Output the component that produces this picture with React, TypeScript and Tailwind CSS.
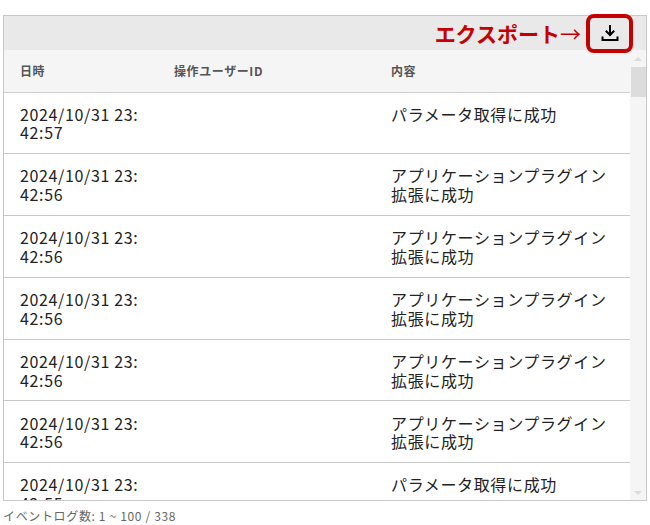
import React from 'react';

const SUCCESS_PARAM = 'パラメータ取得に成功';
const SUCCESS_PLUGIN = 'アプリケーションプラグイン拡張に成功';

const rows = [
    { date: '2024/10/31 23:42:57', message: SUCCESS_PARAM },
    { date: '2024/10/31 23:42:56', message: SUCCESS_PLUGIN },
    { date: '2024/10/31 23:42:56', message: SUCCESS_PLUGIN },
    { date: '2024/10/31 23:42:56', message: SUCCESS_PLUGIN },
    { date: '2024/10/31 23:42:56', message: SUCCESS_PLUGIN },
    { date: '2024/10/31 23:42:56', message: SUCCESS_PLUGIN },
    { date: '2024/10/31 23:42:55', message: SUCCESS_PARAM },
];

const DownloadIcon: React.FC = () => (
    <svg width="18" height="18" viewBox="0 0 18 18" fill="none" stroke="#000" strokeWidth="2">
        <path d="M9 1V11" />
        <path d="M4.8 6.8 9 11l4.2-4.2" />
        <path d="M1.5 12.5v3.5h15v-3.5" />
    </svg>
);

const App: React.FC = () => {
    return (
        <div className="w-[650px] h-[525px] bg-white overflow-hidden pt-[15px] pl-[3px] font-['Noto_Sans_CJK_JP','Noto_Sans',sans-serif]">
            <div className="w-[644px] h-[486px] border border-[#c8c8c8] flex flex-col">
                <div className="relative z-10 h-[34px] shrink-0 bg-[#e9e9e9] flex items-center justify-end pr-[13px]">
                    <span className="text-[#c40000] text-[21px] font-bold leading-none whitespace-nowrap">
                        エクスポート<span className="font-normal">→</span>
                    </span>
                    <div className="shrink-0 ml-[5px] w-[47px] h-[39px] rounded-[8px] border-[4px] border-[#c40000] flex items-center justify-center">
                        <DownloadIcon />
                    </div>
                </div>
                <div className="flex flex-1 min-h-0">
                    <div className="w-[626px] overflow-hidden">
                        <div className="h-[42.5px] bg-[#f5f5f5] border-b border-[#d0d0d0] grid grid-cols-[154px_217px_255px] items-center text-[12px] tracking-[0.6px] font-bold text-[#555555]">
                            <div className="pl-4">日時</div>
                            <div className="pl-4">操作ユーザーID</div>
                            <div className="pl-4">内容</div>
                        </div>
                        {rows.map((row, i) => (
                            <div key={i} className="h-[61.8px] border-b border-[#c8c8c8] grid grid-cols-[154px_217px_255px] pt-[12.2px] text-[16px] tracking-[0.64px] leading-[18.7px] text-[#222222]">
                                <div className="px-4 break-all">{row.date}</div>
                                <div className="px-4"></div>
                                <div className="px-4 break-all">{row.message}</div>
                            </div>
                        ))}
                    </div>
                    <div className="w-[16px] bg-[#f5f5f5] flex flex-col items-center">
                        <div className="mt-[7px] w-0 h-0 border-x-[4px] border-x-transparent border-b-[4px] border-b-[#dcdcdc]"></div>
                        <div className="mt-[6px] w-[15px] h-[30px] bg-[#dcdcdc]"></div>
                        <div className="mt-auto mb-[5px] w-0 h-0 border-x-[4px] border-x-transparent border-t-[4px] border-t-[#dcdcdc]"></div>
                    </div>
                </div>
            </div>
            <div className="mt-[7px] text-[12px] tracking-[0.65px] leading-[16px] text-[#666666] whitespace-nowrap">イベントログ数: 1 ~ 100 / 338</div>
        </div>
    );
};

export default App;
